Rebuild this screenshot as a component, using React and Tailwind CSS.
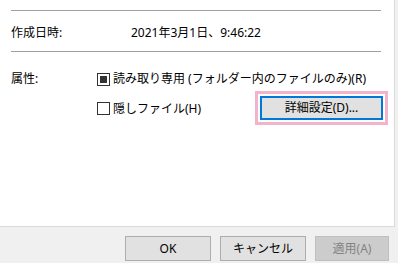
const FONT = "font-['Noto_Sans','Noto_Sans_CJK_JP',sans-serif]";

function Checkbox({ checked }) {
  return (
    <span className="w-[13px] h-[13px] border border-[#333333] bg-white flex items-center justify-center flex-shrink-0">
      {checked && <span className="w-[7px] h-[7px] bg-[#333333]" />}
    </span>
  );
}

function DialogButton({ children, disabled }) {
  return (
    <button
      className={`w-full h-[25px] flex items-center justify-center text-[12px] border ${
        disabled
          ? 'bg-[#cccccc] border-[#bfbfbf] text-[#838383]'
          : 'bg-[#e1e1e1] border-[#adadad] text-black'
      }`}
    >
      {children}
    </button>
  );
}

export default function App() {
  return (
    <div className={`w-[398px] h-[263px] bg-[#f0f0f0] flex flex-col overflow-hidden ${FONT}`}>
      <div className="h-[227px] w-[395px] bg-white border-r border-b border-[#dadada] pl-[11px] pt-[10px] flex-shrink-0">
        <div className="w-[370px] h-px bg-[#a0a0a0]" />
        <div className="h-[40px] flex items-center text-[12px] text-black leading-none pt-[4px]">
          <span className="w-[120px]">作成日時:</span>
          <span>2021年3月1日、9:46:22</span>
        </div>
        <div className="w-[370px] h-px bg-[#a0a0a0]" />

        <div className="flex mt-[20px] text-[12px] text-black leading-none">
          <div className="w-[86px] pt-[1px]">属性:</div>
          <div className="flex flex-col">
            <div className="flex items-center gap-[3px] h-[14px]">
              <Checkbox checked />
              <span>読み取り専用 (フォルダー内のファイルのみ)(R)</span>
            </div>
            <div className="flex items-center mt-[5px]">
              <div className="flex items-center gap-[3px] w-[158px] pt-[1px]">
                <Checkbox />
                <span>隠しファイル(H)</span>
              </div>
              <div className="border-[3px] border-[#f4b3cc] p-[2px]">
                <button className="w-[123px] h-[24px] bg-[#e1e1e1] border-2 border-[#0078d7] flex items-center justify-center text-[12px] text-black">
                  詳細設定(D)...
                </button>
              </div>
            </div>
          </div>
        </div>
      </div>

      <div className="flex pl-[125px] pt-[9px] gap-[9px]">
        <div className="w-[86px]"><DialogButton>OK</DialogButton></div>
        <div className="w-[86px]"><DialogButton>キャンセル</DialogButton></div>
        <div className="w-[74px]"><DialogButton disabled>適用(A)</DialogButton></div>
      </div>
    </div>
  );
}
